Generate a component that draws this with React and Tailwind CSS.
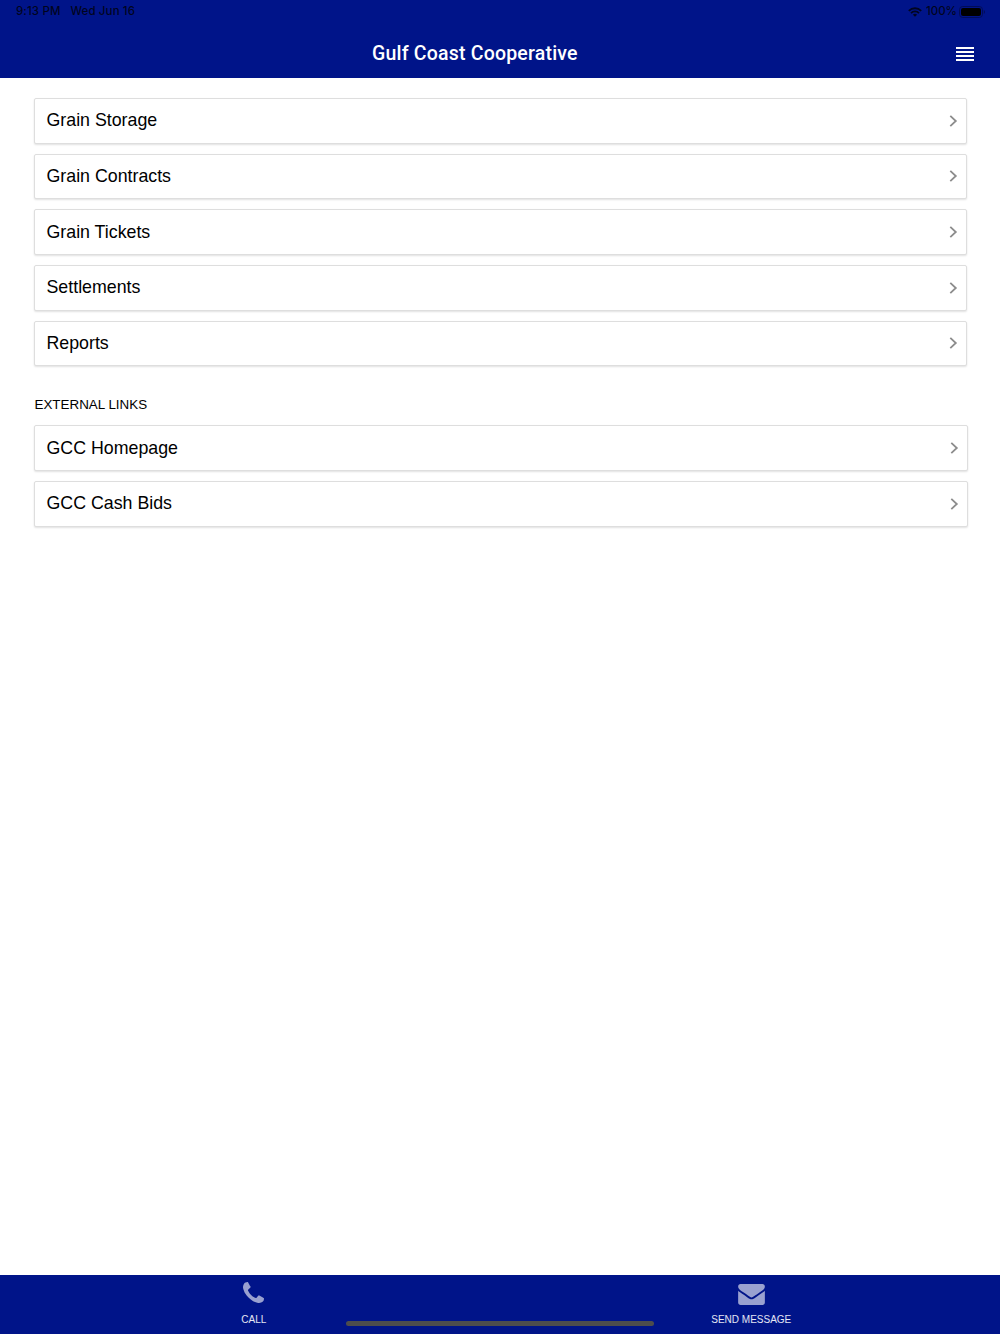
import React from 'react';

const accountLinks = ['Grain Storage', 'Grain Contracts', 'Grain Tickets', 'Settlements', 'Reports'];
const externalLinks = ['GCC Homepage', 'GCC Cash Bids'];

const StatusBar = () => (
    <div className="flex h-6 items-center justify-between pl-4 pr-[15px] font-['Inter'] text-[11.5px] font-medium text-black/80">
        <div className="flex gap-[10px]">
            <span className="tracking-[0.12px]">9:13 PM</span>
            <span className="tracking-[0.12px]">Wed Jun 16</span>
        </div>
        <div className="flex items-center">
            <svg width="14" height="10" viewBox="0 0 14 10" fill="none" stroke="#000520" strokeWidth="1.8" className="mr-1">
                <path d="M.8 3.8a8.8 8.8 0 0 1 12.4 0M3 6.1a5.7 5.7 0 0 1 8 0" />
                <path d="M4.9 7.7 7 9.8l2.1-2.1a3 3 0 0 0-4.2 0z" fill="#000520" stroke="none" />
            </svg>
            <span className="mr-[2px]">100%</span>
            {/* Battery */}
            <svg width="26" height="12" viewBox="0 0 26 12">
                <rect x=".5" y=".5" width="23" height="11" rx="3.2" fill="none" stroke="#000c59" />
                <rect x="2" y="2" width="20" height="8" rx="2" fill="#000" />
                <path d="M24.8 4v4q1.2-.6 1.2-2t-1.2-2z" fill="#000c59" />
            </svg>
        </div>
    </div>
);

const LinkCard = ({ label }) => (
    <a className="flex h-[45.67px] items-center justify-between rounded-[2px] border border-[#dedede] bg-white pl-3 pr-2 text-[17.8px] text-black shadow-[0_1px_2px_rgba(0,0,0,0.12)]">
        {label}
        <svg width="9" height="12" viewBox="0 0 9 12" fill="none" stroke="#8c8c8c" strokeWidth="1.8">
            <path d="M1.3 .9 6.8 6 1.3 11.1" />
        </svg>
    </a>
);

const PhoneIcon = () => (
    <svg width="21" height="21" viewBox="0 128 1408 1408" fill="currentColor">
        <path d="M1408 1240q0 27-10 70.5t-21 68.5q-21 50-122 106-94 51-186 51-27 0-52.5-3.5t-57.5-12.5-47.5-14.5-55.5-20.5-49-18q-98-35-175-83-128-79-264.5-215.5t-215.5-264.5q-48-77-83-175-3-9-18-49t-20.5-55.5-14.5-47.5-12.5-57.5-3.5-52.5q0-92 51-186 56-101 106-122 25-11 68.5-21t70.5-10q14 0 21 3 18 6 53 76 11 19 30 54t35 63.5 31 53.5q3 4 17.5 25t21.5 35.5 7 28.5q0 20-28.5 50t-62 55-62 53-28.5 46q0 9 5 22.5t8.5 20.5 14 24 11.5 19q76 137 174 235t235 174q2 1 19 11.5t24 14 20.5 8.5 22.5 5q18 0 46-28.5t53-62 55-62 50-28.5q14 0 28.5 7t35.5 21.5 25 17.5q25 15 53.5 31t63.5 35 54 30q70 35 76 53 3 7 3 21z" />
    </svg>
);

const EnvelopeIcon = () => (
    <svg width="27" height="21" viewBox="0 256 1792 1408" fill="currentColor">
        <path d="M1792 710v794q0 66-47 113t-113 47h-1472q-66 0-113-47t-47-113v-794q44 49 101 87 362 246 497 345 57 42 92.5 65.5t94.5 48 110 24.5h2q51 0 110-24.5t94.5-48 92.5-65.5q170-123 498-345 57-39 100-87zm0-294q0 79-49 151t-122 123q-376 261-468 325-10 7-42.5 31t-54 38.5-52 32.5-57.5 27-50 9h-2q-23 0-50-9t-57.5-27-52-32.5-54-38.5-42.5-31q-91-64-262-182.5t-205-142.5q-62-42-117-115.5t-55-136.5q0-78 41.5-130t118.5-52h1472q65 0 112.5 47t47.5 113z" />
    </svg>
);

export default function App() {
    return (
        <div className="flex h-[1334px] w-[1000px] flex-col overflow-hidden bg-white font-['Liberation_Sans',sans-serif]">
            <header className="h-[78.3px] shrink-0 bg-[#001489]">
                <StatusBar />
                <div className="flex h-[60px] items-center justify-between pl-[372px] pr-[26px]">
                    <h1 className="font-['Roboto'] text-[19.5px] font-medium tracking-[0.2px] text-white">Gulf Coast Cooperative</h1>
                    <button className="flex flex-col gap-[2px]" aria-label="Menu">
                        <span className="h-[2px] w-[18px] bg-white" />
                        <span className="h-[2px] w-[18px] bg-white" />
                        <span className="h-[2px] w-[18px] bg-white" />
                        <span className="h-[2px] w-[18px] bg-white" />
                    </button>
                </div>
            </header>

            <main className="flex-1 pt-[19.7px] pl-[33.5px]">
                <nav className="flex w-[933px] flex-col gap-[10px]">
                    {accountLinks.map((label) => <LinkCard key={label} label={label} />)}
                </nav>
                <h2 className="mt-[30px] mb-[11px] pl-[1px] text-[13.4px] leading-[18px] text-black">EXTERNAL LINKS</h2>
                <nav className="flex w-[934px] flex-col gap-[10px]">
                    {externalLinks.map((label) => <LinkCard key={label} label={label} />)}
                </nav>
            </main>

            <footer className="relative flex h-[59px] shrink-0 bg-[#001489] pl-[5px] text-[10px] text-white/90">
                <button className="flex w-[500px] flex-col items-center pt-[7px]">
                    <span className="flex h-[24px] items-start text-white/60"><PhoneIcon /></span>
                    <span className="mt-[7px] leading-[14px]">CALL</span>
                </button>
                <button className="flex w-[500px] flex-col items-center pt-[9px]">
                    <span className="flex h-[22px] items-start text-white/60"><EnvelopeIcon /></span>
                    <span className="mt-[7px] leading-[14px]">SEND MESSAGE</span>
                </button>
                {/* Home indicator */}
                <div className="absolute top-[46px] left-[346px] h-[5px] w-[308px] rounded-full bg-[#4d4d4d]" />
            </footer>
        </div>
    );
}
